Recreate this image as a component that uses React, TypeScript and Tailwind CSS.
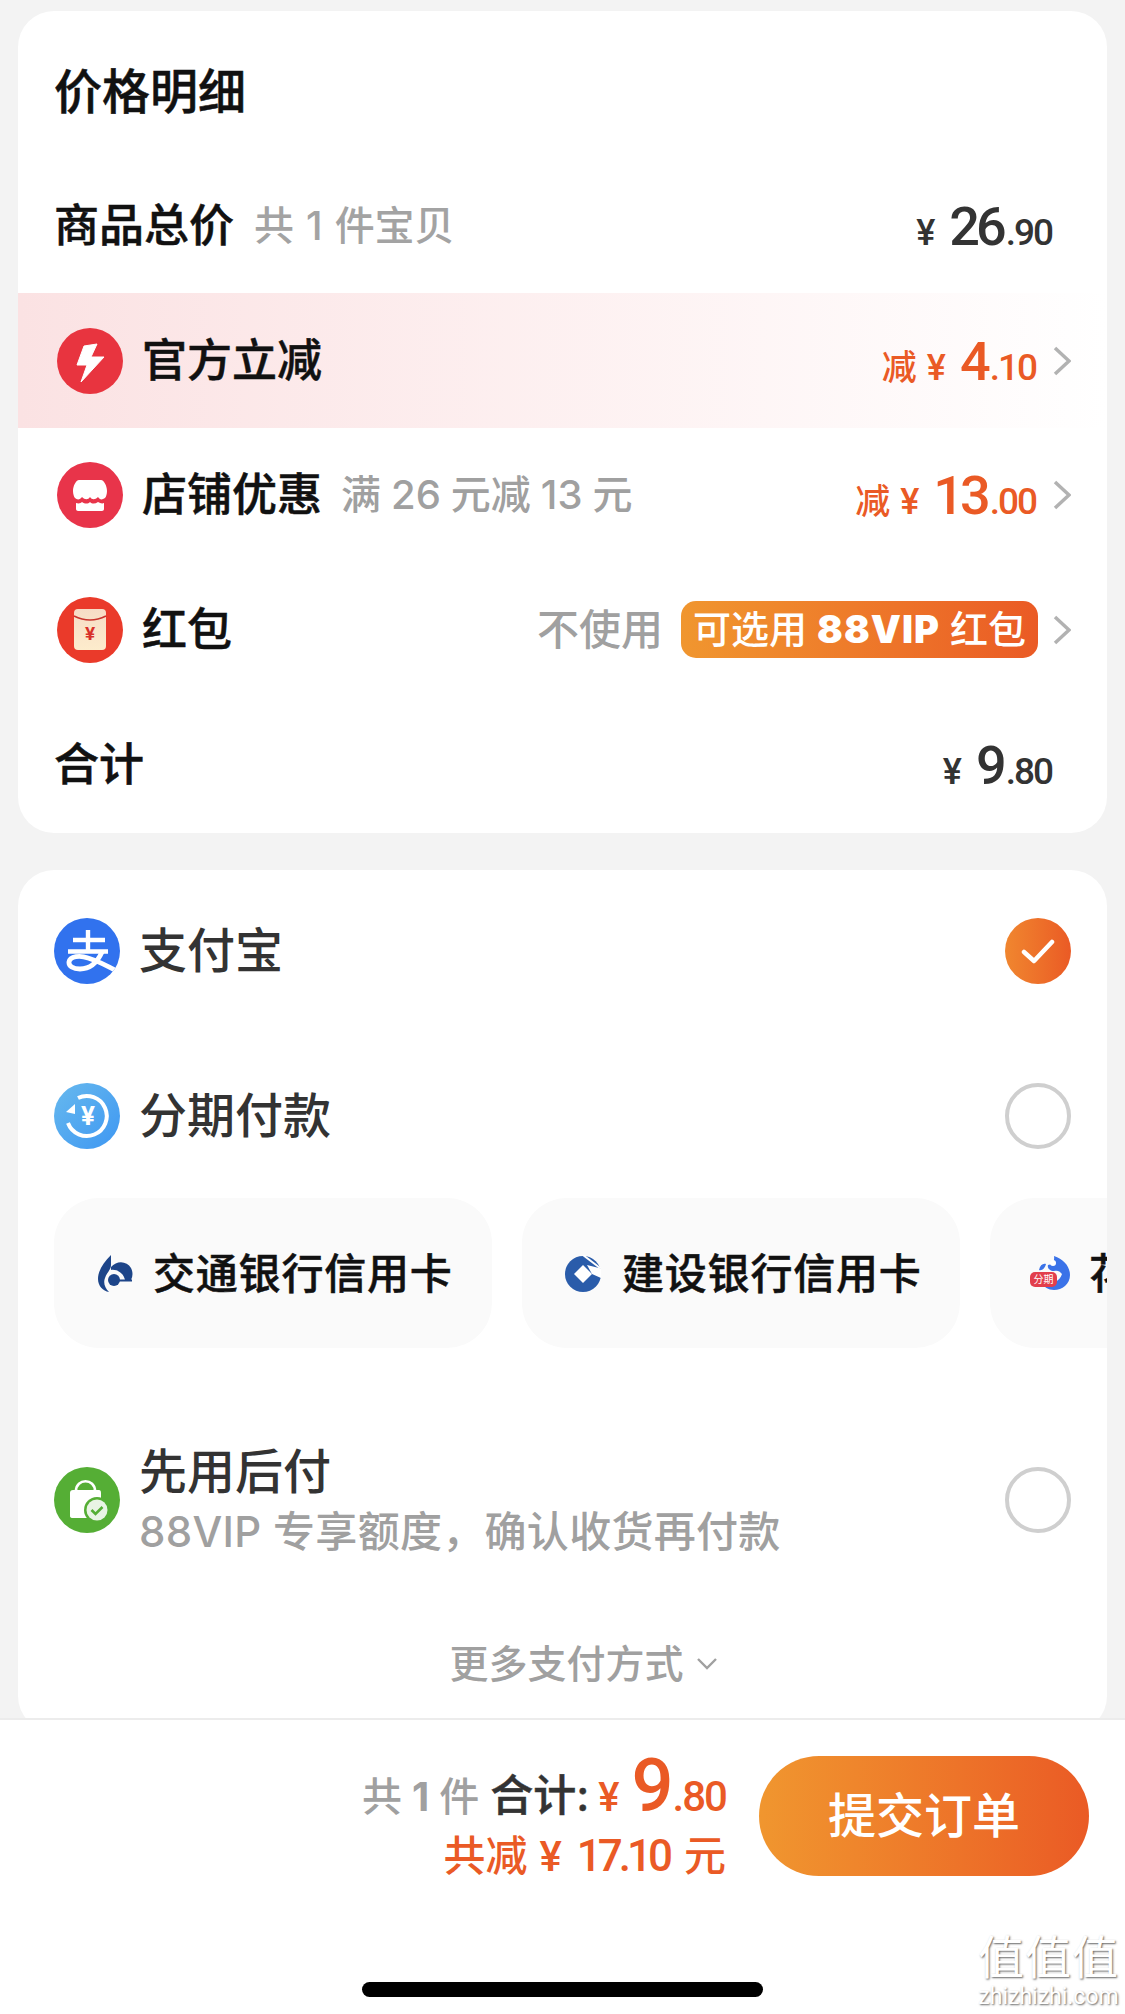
import React from "react";

const numFont = "font-['Roboto','Noto_Sans_CJK_SC',sans-serif]";
const heavy = "font-medium [-webkit-text-stroke:0.5px]";

function Price({
  color,
  int,
  dec,
  prefix,
}: {
  color: string;
  int: string;
  dec: string;
  prefix?: string;
}) {
  return (
    <span className={`flex items-baseline pt-[8px] ${color} ${numFont} font-medium`}>
      {prefix && <span className="text-[35px] mr-[10px] font-['Noto_Sans_CJK_SC',sans-serif]">{prefix}</span>}
      <span className="text-[36px] mr-[14px]">¥</span>
      <span className="text-[54px] leading-none tracking-[-4px]">{int}</span>
      <span className="ml-[3px] text-[37px] leading-none tracking-[-2px]">.{dec}</span>
    </span>
  );
}

function Chevron() {
  return (
    <svg width="18" height="30" viewBox="0 0 18 30" className="shrink-0">
      <path d="M2 2l14 13L2 28" fill="none" stroke="#b2b2b2" strokeWidth="3.5" />
    </svg>
  );
}

function BoltIcon() {
  return (
    <svg width="66" height="66" viewBox="0 0 66 66" className="shrink-0">
      <circle cx="33" cy="33" r="33" fill="#e8343f" />
      <path d="M27 18L40 16L34 29L47 29L24 54L30 37L20 37Z" fill="#fff" stroke="#fff" strokeWidth="1" strokeLinejoin="round" />
    </svg>
  );
}

function StoreIcon() {
  return (
    <svg width="66" height="66" viewBox="0 0 66 66" className="shrink-0">
      <circle cx="33" cy="33" r="33" fill="#e8344a" />
      <path d="M22 18H44C47 18 50 24 50 29C50 32 49 35 48 36C45 38 43 38 41 35C38 38 35 38 33 35C31 38 28 38 25 35C23 38 20 38 18 36C17 35 16 32 16 29C16 24 19 18 22 18Z" fill="#fff" />
      <path d="M19 41C22 42 24 41 25 40C28 42 31 42 33 40C35 42 38 42 41 40C43 41 45 42 47 41V47C47 48 46 49 45 49H21C20 49 19 48 19 47Z" fill="#fff" />
    </svg>
  );
}

function PacketIcon() {
  return (
    <svg width="66" height="66" viewBox="0 0 66 66" className="shrink-0">
      <defs>
        <linearGradient id="packet" x1="0" y1="0" x2="0" y2="1">
          <stop offset="0" stopColor="#f6dcc6" />
          <stop offset="1" stopColor="#fdeccc" />
        </linearGradient>
      </defs>
      <circle cx="33" cy="33" r="33" fill="#ea3a2a" />
      <rect x="17" y="12" width="32" height="41" rx="4" fill="url(#packet)" />
      <path d="M17 19Q33 27 49 19" fill="none" stroke="#c8332c" strokeWidth="1.6" />
      <text x="33" y="43" textAnchor="middle" fontSize="19" fontWeight="700" fill="#d8312a" fontFamily="Roboto">¥</text>
    </svg>
  );
}

function AlipayIcon() {
  return (
    <svg width="66" height="66" viewBox="0 0 66 66" className="shrink-0">
      <defs>
        <clipPath id="alipay">
          <circle cx="33" cy="33" r="33" />
        </clipPath>
      </defs>
      <circle cx="33" cy="33" r="33" fill="#3172ee" />
      <g clipPath="url(#alipay)" fill="none" stroke="#fff" strokeWidth="4.4">
        <path d="M19 22H51M34 12V34M14 33.5H54" />
        <path d="M48 34C43 45 35 51 26 51C19 51 14.5 48 15 44C16 38 26 37 34 40C44 43 54 48 68 56" strokeWidth="4.8" />
      </g>
    </svg>
  );
}

function InstallmentIcon() {
  return (
    <svg width="66" height="66" viewBox="0 0 66 66" className="shrink-0">
      <defs>
        <linearGradient id="inst" x1="0" y1="0" x2="1" y2="1">
          <stop offset="0" stopColor="#67b9ee" />
          <stop offset="1" stopColor="#3e97f2" />
        </linearGradient>
      </defs>
      <circle cx="33" cy="33" r="33" fill="url(#inst)" />
      <path d="M24 15A20 20 0 1 1 14 40" fill="none" stroke="#fff" strokeWidth="4" />
      <path d="M12 29L21 21V31Z" fill="#fff" />
      <text x="34" y="42" textAnchor="middle" fontSize="26" fontWeight="700" fill="#fff" fontFamily="Roboto">¥</text>
    </svg>
  );
}

function BagIcon() {
  return (
    <svg width="66" height="66" viewBox="0 0 66 66" className="shrink-0">
      <circle cx="33" cy="33" r="33" fill="#55ae35" />
      <path d="M19 23H45Q47 23 47 26V49Q47 51 45 51H19Q16 51 16 49V26Q16 23 19 23Z" fill="#fff" />
      <path d="M22 24C22 11 41 11 41 24" fill="none" stroke="#fff" strokeWidth="2.6" />
      <circle cx="43" cy="43" r="13" fill="#55ae35" />
      <circle cx="43" cy="43" r="10.5" fill="#e9f4e4" />
      <path d="M37.5 43l4 4 7-7" fill="none" stroke="#55ae35" strokeWidth="2.6" />
    </svg>
  );
}

function BocomIcon() {
  return (
    <svg width="35" height="37" viewBox="0 0 35 37" className="shrink-0">
      <path d="M13 0C5 8 0 16 0 24C0 31 5 36 11 37C7 33 5 28 7 23C9 17 13 15 13 10Z" fill="#1d4589" />
      <path d="M13 12C19 5 29 6 33 13C35 17 35 21 33 25H27C26 19 20 14 13 15Z" fill="#1d4589" />
      <circle cx="16" cy="25" r="6" fill="#1d4589" />
      <path d="M21 24.5H34V26.5H21Z" fill="#1d4589" />
    </svg>
  );
}

function CcbIcon() {
  return (
    <svg width="36" height="37" viewBox="0 0 36 37" className="shrink-0">
      <circle cx="18" cy="19" r="18" fill="#2a5caa" />
      <path d="M18 10L27 19L18 28L9 19Z" fill="#fff" />
      <path d="M22 10L38 14V24L27 19Z" fill="#fff" />
      <path d="M18 0L35 13" stroke="#fff" strokeWidth="2" />
    </svg>
  );
}

function HuabeiIcon() {
  return (
    <div className="relative w-[40px] h-[34px] shrink-0">
      <svg width="40" height="34" viewBox="0 0 40 34" className="block">
        <path d="M24 0C34 3 40 11 40 19C40 28 32 34 24 34C18 34 14 31 12 27C20 29 29 27 32 18C30 15 27 14 24 15C20 15 17 12 18 9C21 9 25 7 24 0Z" fill="#3a72e8" />
        <circle cx="23" cy="7" r="3" fill="#fff" />
        <path d="M9 14C10 9 13 7 16 8C15 12 12 15 9 14Z" fill="#3a72e8" />
      </svg>
      <span className="absolute left-0 top-[16px] w-[27px] h-[15px] rounded-[5px] bg-[#e23f4c] text-white text-[10px] leading-[15px] text-center">
        分期
      </span>
    </div>
  );
}

function Radio({ checked }: { checked?: boolean }) {
  if (checked) {
    return (
      <div className="w-[66px] h-[66px] rounded-full bg-gradient-to-r from-[#f0862f] to-[#ea5a25] flex items-center justify-center shrink-0">
        <svg width="34" height="28" viewBox="0 0 34 28">
          <path d="M3 15l10 9L31 5" fill="none" stroke="#fff" strokeWidth="4.5" strokeLinecap="round" strokeLinejoin="round" />
        </svg>
      </div>
    );
  }
  return <div className="w-[66px] h-[66px] rounded-full border-4 border-[#cfcfcf] shrink-0"></div>;
}

const chips = [
  { text: "交通银行信用卡", icon: <BocomIcon />, pad: "pl-[44px] gap-[20px]" },
  { text: "建设银行信用卡", icon: <CcbIcon />, pad: "pl-[43px] gap-[21px]" },
  { text: "花呗分期", icon: <HuabeiIcon />, pad: "pl-[40px] gap-[19px]" },
];

export default function App() {
  return (
    <div className="relative flex flex-col w-[1125px] h-[2014px] overflow-hidden bg-[#f3f3f3] font-['Inter','Noto_Sans_CJK_SC',sans-serif]">
      {/* 价格明细 */}
      <section className="mt-[11px] mx-[18px] h-[822px] flex flex-col rounded-[36px] bg-white text-[#111]">
        <div className={`h-[148px] pt-[14px] px-[36px] flex items-center text-[48px] ${heavy}`}>价格明细</div>

        <div className="h-[134px] pl-[36px] pr-[55px] flex items-center justify-between">
          <div className="flex items-center">
            <span className={`text-[45px] ${heavy}`}>商品总价</span>
            <span className="ml-[20px] text-[40px] text-[#a3a3a3] font-medium">
              共<span className="mx-[12px]">1</span>件宝贝
            </span>
          </div>
          <Price color="text-[#333]" int="26" dec="90" />
        </div>

        <div className="h-[135px] pl-[39px] pr-[36px] flex items-center justify-between bg-gradient-to-r from-[#fbe2e3] to-white">
          <div className="flex items-center gap-[19px]">
            <BoltIcon />
            <span className={`text-[45px] ${heavy}`}>官方立减</span>
          </div>
          <div className="flex items-center gap-[17px]">
            <Price color="text-[#ea5a25]" prefix="减" int="4" dec="10" />
            <Chevron />
          </div>
        </div>

        <div className="h-[134px] pl-[39px] pr-[36px] flex items-center justify-between">
          <div className="flex items-center gap-[19px]">
            <StoreIcon />
            <span className={`text-[45px] ${heavy}`}>店铺优惠</span>
            <span className="text-[40px] text-[#a0a0a0] font-medium">
              满<span className="mx-[10px]">26</span>元减<span className="mx-[10px]">13</span>元
            </span>
          </div>
          <div className="flex items-center gap-[17px]">
            <Price color="text-[#ea5a25]" prefix="减" int="13" dec="00" />
            <Chevron />
          </div>
        </div>

        <div className="h-[135px] pl-[39px] pr-[36px] flex items-center justify-between">
          <div className="flex items-center gap-[19px]">
            <PacketIcon />
            <span className={`text-[45px] ${heavy}`}>红包</span>
          </div>
          <div className="flex items-center">
            <span className="text-[42px] text-[#a0a0a0] font-medium">不使用</span>
            <span className="ml-[18px] w-[357px] h-[57px] rounded-[15px] bg-gradient-to-r from-[#f0962f] to-[#ea5a25] text-white text-[38px] font-medium flex items-center justify-center whitespace-nowrap">
              可选用<b className="mx-[10px] font-black tracking-[1px]">88VIP</b>红包
            </span>
            <span className="ml-[15px]">
              <Chevron />
            </span>
          </div>
        </div>

        <div className="flex-1 pl-[36px] pr-[55px] flex items-center justify-between">
          <span className={`text-[45px] ${heavy}`}>合计</span>
          <Price color="text-[#333]" int="9" dec="80" />
        </div>
      </section>

      {/* 支付方式 */}
      <section className="mt-[37px] mx-[18px] h-[862px] shrink-0 pt-[16px] flex flex-col rounded-[36px] bg-white text-[#333] overflow-hidden">
        <div className="h-[130px] pl-[36px] pr-[36px] flex items-center justify-between">
          <div className="flex items-center gap-[19px]">
            <AlipayIcon />
            <span className="text-[48px] font-medium">支付宝</span>
          </div>
          <Radio checked />
        </div>

        <div className="mt-[35px] h-[130px] pl-[36px] pr-[36px] flex items-center justify-between">
          <div className="flex items-center gap-[19px]">
            <InstallmentIcon />
            <span className="text-[48px] font-medium">分期付款</span>
          </div>
          <Radio />
        </div>

        <div className="mt-[17px] pl-[36px] flex gap-[30px] overflow-hidden">
          {chips.map((chip, idx) => (
            <div key={idx} className={`w-[438px] h-[150px] shrink-0 flex items-center rounded-[45px] bg-[#fafafa] text-[#111] ${chip.pad}`}>
              {chip.icon}
              <span className={`text-[42px] whitespace-nowrap tracking-[0.8px] ${heavy}`}>{chip.text}</span>
            </div>
          ))}
        </div>

        <div className="mt-[87px] h-[130px] pl-[36px] pr-[36px] flex items-center justify-between">
          <div className="flex items-center gap-[19px]">
            <BagIcon />
            <div className="flex flex-col">
              <span className="text-[48px] leading-[64px] font-medium">先用后付</span>
              <span className="text-[42px] leading-[56px] tracking-[0.3px] text-[#a0a0a0] font-medium">88VIP 专享额度，确认收货再付款</span>
            </div>
          </div>
          <Radio />
        </div>

        <div className="mt-[69px] h-[60px] pl-[42px] flex items-center justify-center gap-[12px] text-[#a0a0a0] text-[39px] font-medium">
          <span>更多支付方式</span>
          <svg width="22" height="14" viewBox="0 0 22 14">
            <path d="M2 2l9 9 9-9" fill="none" stroke="#a0a0a0" strokeWidth="2.4" />
          </svg>
        </div>
      </section>

      {/* 底部结算栏 */}
      <footer className="relative -mt-[14px] flex-1 bg-white border-t-2 border-[#ececec] flex flex-col pt-[36px]">
        <div className="flex justify-end items-start gap-[33px] pr-[36px]">
          <div className="flex flex-col items-end">
            <div className="flex items-baseline h-[67px] -mt-[7px]">
              <span className="text-[40px] text-[#a0a0a0] font-medium">
                共<b className="mx-[10px] font-bold">1</b>件
              </span>
              <span className={`ml-[11px] text-[43px] text-[#333] ${heavy}`}>合计:</span>
              <span className={`ml-[9px] flex items-baseline text-[#ea5a25] font-medium ${numFont}`}>
                <span className="text-[40px] mr-[12px]">¥</span>
                <span className="text-[74px] leading-none tracking-[-3px]">9</span>
                <span className="ml-[2px] text-[42px] leading-none tracking-[-2px]">.80</span>
              </span>
            </div>
            <div className="mt-[14px] flex items-baseline text-[42px] leading-[52px] text-[#ea5a25] font-medium whitespace-nowrap">
              共减
              <span className={`ml-[12px] ${numFont}`}>¥</span>
              <span className={`ml-[15px] text-[44px] tracking-[-4px] ${numFont}`}>17.10</span>
              <span className="ml-[15px]">元</span>
            </div>
          </div>
          <button className="w-[330px] h-[120px] rounded-full bg-gradient-to-r from-[#f0962f] to-[#ea5a25] text-white text-[48px] font-medium">
            提交订单
          </button>
        </div>
        <div className="mt-[99px] mx-auto w-[401px] h-[15px] rounded-full bg-black"></div>
      </footer>

      {/* 水印 */}
      <div className="absolute right-[6px] bottom-[3px] flex flex-col items-center text-white [text-shadow:1px_1px_2px_#666]">
        <span className="text-[46px] leading-[52px] tracking-[1px]">值值值</span>
        <span className={`text-[23px] leading-[28px] ${numFont}`}>zhizhizhi.com</span>
      </div>
    </div>
  );
}
